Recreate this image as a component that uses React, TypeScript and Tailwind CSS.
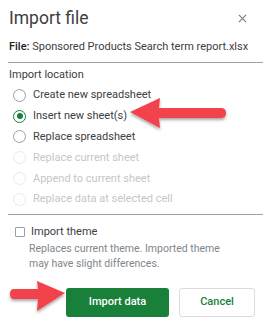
import React from 'react';

const options = [
  { label: 'Create new spreadsheet', checked: false, disabled: false },
  { label: 'Insert new sheet(s)', checked: true, disabled: false },
  { label: 'Replace spreadsheet', checked: false, disabled: false },
  { label: 'Replace current sheet', checked: false, disabled: true },
  { label: 'Append to current sheet', checked: false, disabled: true },
  { label: 'Replace data at selected cell', checked: false, disabled: true },
];

const Radio: React.FC<{ checked: boolean; disabled: boolean }> = ({ checked, disabled }) => (
  <span
    className={`flex items-center justify-center w-[13px] h-[13px] rounded-full border-[1.5px] ${
      checked ? 'border-[#188038]' : disabled ? 'border-[#e8eaed]' : 'border-[#9aa0a6]'
    }`}
  >
    {checked && <span className="w-[6px] h-[6px] rounded-full bg-[#188038]" />}
  </span>
);

// red call-out arrows drawn over the dialog
const Arrows = () => (
  <svg className="absolute inset-0 w-[271px] h-[330px] pointer-events-none" viewBox="0 0 271 330">
    <defs>
      <filter id="sh" x="-20%" y="-30%" width="140%" height="180%">
        <feDropShadow dx="0" dy="2" stdDeviation="1.5" floodColor="#000" floodOpacity="0.35" />
      </filter>
    </defs>
    <path
      d="M130 112 L160 98 L159 108 L221 108 Q226 108 226 113 Q226 118 221 118 L159 118 L160 128 Z"
      fill="#f2434b"
      filter="url(#sh)"
    />
    <path
      d="M65 293 L37 281 L38 289 L14 289 Q10 289 10 294 Q10 299 14 299 L38 299 L37 311 Z"
      fill="#f2434b"
      filter="url(#sh)"
    />
  </svg>
);

export default function App() {
  return (
    <div className="relative w-[271px] h-[330px] bg-white overflow-hidden font-['Roboto',sans-serif] text-[#3c4043]">
      <div className="flex items-center justify-between h-[36px] pl-[9px] pr-[24px]">
        <h1 className="text-[17.5px] leading-[24px] text-[#3c4043]">Import file</h1>
        <svg className="w-[9px] h-[9px]" viewBox="0 0 10 10">
          <path d="M1 1 L9 9 M9 1 L1 9" stroke="#7a7d81" strokeWidth="1.3" />
        </svg>
      </div>
      <div className="mt-[3px] mx-[8px] pl-[1px] pb-[7px] border-b border-[#9e9e9e] text-[11px] leading-[16px] whitespace-nowrap">
        <span className="font-medium text-[#202124]">File:</span> Sponsored Products Search term report.xlsx
      </div>
      <div className="mx-[8px]">
        <div className="pl-[1px] pt-[4px] text-[11px] leading-[16px]">Import location</div>
        <div className="flex flex-col pt-[2px] pb-[4px]">
          {options.map((o) => (
            <label key={o.label} className="flex items-center h-[20.8px] pl-[5px] gap-[7px]">
              <Radio checked={o.checked} disabled={o.disabled} />
              <span className={`text-[11px] leading-[16px] ${o.disabled ? 'text-[#c4c7c9]' : 'text-[#3c4043]'}`}>
                {o.label}
              </span>
            </label>
          ))}
        </div>
        <div className="border-t border-[#9e9e9e]" />
        <div className="flex items-center h-[16px] mt-[9px] gap-[6px] pl-[7px]">
          <span className="w-[10px] h-[10px] border border-[#9aa0a6] rounded-[1px]" />
          <span className="text-[11px] leading-[16px]">Import theme</span>
        </div>
        <p className="pl-[21px] pt-[1px] text-[10.5px] leading-[15px] text-[#80868b]">
          Replaces current theme. Imported theme
          <br />
          may have slight differences.
        </p>
        <div className="flex justify-end gap-[10px] pt-[17px] pr-[8px]">
          <button className="w-[103px] h-[29px] rounded-[3px] bg-[#188038] text-white text-[11px] font-medium">
            Import data
          </button>
          <button className="w-[76px] h-[29px] rounded-[3px] border border-[#dadce0] bg-white text-[#188038] text-[11px] font-medium">
            Cancel
          </button>
        </div>
      </div>
      <Arrows />
    </div>
  );
}
